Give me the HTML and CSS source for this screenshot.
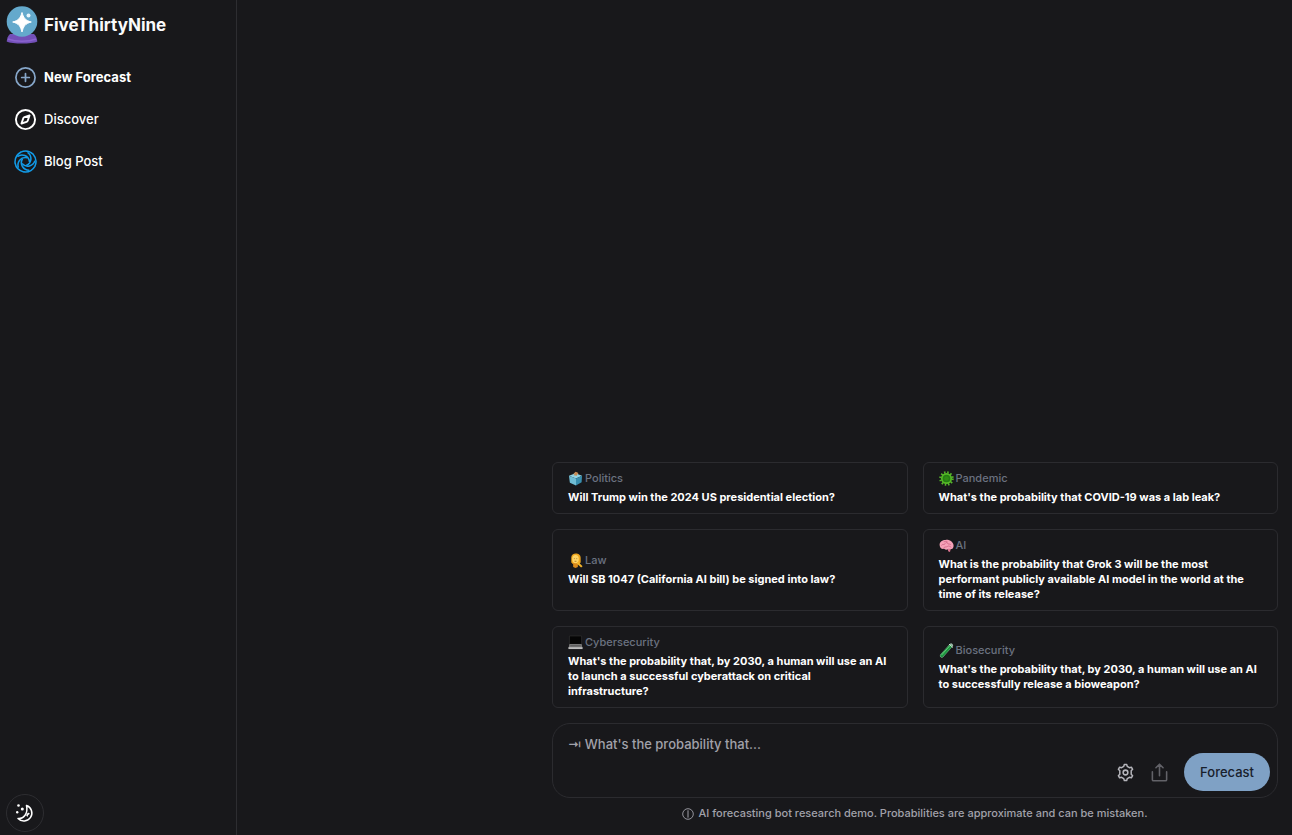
FILE: index.html
```html
<!DOCTYPE html>
<html lang="en">
<head>
    <meta charset="UTF-8">
    <meta name="viewport" content="width=device-width, initial-scale=1.0">
    <title>FiveThirtyNine</title>
    <link rel="stylesheet" href="styles.css">
</head>
<body>
    <aside class="sidebar">
        <a class="brand" href="#">
            <svg class="brand-logo" width="32" height="40" viewBox="0 0 32 40" aria-hidden="true">
                <path d="M4 29h24c2 2 3 4 3.300 7.500C26 39.300 6 39.300.7 36.500 1 33 2 31 4 29z" fill="#7350b8"/>
                <path d="M2 34c8 3 20 3 28 0" fill="none" stroke="#8a63cf" stroke-width="1.500"/>
                <circle cx="16" cy="16.500" r="15.300" fill="#64a9cc"/>
                <path d="M16 7.500C17.500 12.500 19 15.500 25.300 17 19 18.500 17.500 21.500 16 27 14.500 21.500 13 18.500 6.700 17 13 15.500 14.500 12.500 16 7.500z" fill="#fff" stroke="#fff" stroke-linejoin="round"/>
                <circle cx="22.500" cy="10.500" r="2" fill="#e6f5fc"/>
            </svg>
            <span>FiveThirtyNine</span>
        </a>
        <nav class="nav">
            <a class="nav-link active" href="#">
                <svg width="23" height="23" viewBox="0 0 24 24" fill="none" stroke="#86a6c9" stroke-width="1.800" stroke-linecap="round" aria-hidden="true">
                    <circle cx="12" cy="12" r="10"/>
                    <path d="M12 8v8M8 12h8"/>
                </svg>
                New Forecast
            </a>
            <a class="nav-link" href="#">
                <svg width="23" height="23" viewBox="0 0 24 24" fill="none" stroke="#fff" stroke-width="2" stroke-linejoin="round" aria-hidden="true">
                    <circle cx="12" cy="12" r="10"/>
                    <path d="M16.200 7.800l-1.800 5.300a2 2 0 0 1-1.300 1.300l-5.300 1.800 1.800-5.300a2 2 0 0 1 1.300-1.300z"/>
                </svg>
                Discover
            </a>
            <a class="nav-link" href="#">
                <svg width="23" height="23" viewBox="0 0 24 24" fill="none" stroke="#129be8" stroke-width="1.600" aria-hidden="true">
                    <defs>
                        <g id="blade">
                            <path d="M7 2.200C11.500.3 16.500 1 20 4.500"/>
                            <path d="M3.500 7C8 3.500 15.500 5.500 16.200 12.500"/>
                        </g>
                    </defs>
                    <use href="#blade"/>
                    <use href="#blade" transform="rotate(72 12 12)"/>
                    <use href="#blade" transform="rotate(144 12 12)"/>
                    <use href="#blade" transform="rotate(216 12 12)"/>
                    <use href="#blade" transform="rotate(288 12 12)"/>
                </svg>
                Blog Post
            </a>
        </nav>
        <button class="theme-toggle" type="button" aria-label="Toggle theme">
            <svg width="20" height="20" viewBox="0 0 20 20" aria-hidden="true">
                <path d="M11.500 2.500a8 8 0 1 1-8.500 13c5 .8 10.500-4.500 8.500-13z" fill="none" stroke="#fff" stroke-width="1.500" stroke-linejoin="round"/>
                <path d="M13 9.500l2 1.300-1.800 1.300-.8 2-1.300-1.800z" fill="#fff"/>
                <circle cx="3.500" cy="2.500" r="1.300" fill="#fff"/>
                <circle cx="7.300" cy="6" r="1.500" fill="#fff"/>
                <circle cx="2.200" cy="9.300" r="1.200" fill="#fff"/>
            </svg>
        </button>
    </aside>

    <main class="main">
        <div class="panel">
            <div class="cards">
                <button class="card" type="button">
                    <span class="topic">
                        <svg width="15" height="15" viewBox="0 0 16 16" aria-hidden="true">
                            <path d="M5.500 3.500L8 .8l3 1.400-1 3z" fill="#c98b54"/>
                            <path d="M1 5l7-2.500L15 5l-6.500 3z" fill="#91d3e4"/>
                            <path d="M1 5l7.500 3v7.500L2 12.500z" fill="#70bdd5"/>
                            <path d="M15 5L8.500 8v7.500l6-3.500z" fill="#388eae"/>
                            <path d="M6 4.500L8 1l2.500 1.200L9.500 5z" fill="#c98b54"/>
                        </svg>
                        Politics
                    </span>
                    <span class="question">Will Trump win the 2024 US presidential election?</span>
                </button>
                <button class="card" type="button">
                    <span class="topic">
                        <svg width="15" height="15" viewBox="0 0 16 16" aria-hidden="true">
                            <circle cx="8" cy="8" r="6.500" fill="none" stroke="#55b52c" stroke-width="2.500" stroke-dasharray="1.600 1.800"/>
                            <circle cx="8" cy="8" r="5" fill="#237d13" stroke="#55b826" stroke-width="1.800"/>
                            <circle cx="8" cy="8" r="2.500" fill="#2f8c13"/>
                        </svg>
                        Pandemic
                    </span>
                    <span class="question">What's the probability that COVID-19 was a lab leak?</span>
                </button>
                <button class="card" type="button">
                    <span class="topic">
                        <svg width="15" height="15" viewBox="0 0 16 16" aria-hidden="true">
                            <path d="M3.500 5c-.5-6 10-6 10 0v5l-2 2h-6l-2-2z" fill="#eea51e"/>
                            <path d="M5.500 10h5v5L8 16l-2.500-1z" fill="#d9891b"/>
                            <ellipse cx="8" cy="6.500" rx="3.500" ry="4.500" fill="#ffd565"/>
                            <path d="M6.300 6h.8M9 6h.8M7 8.800h2" stroke="#8c5a20" stroke-width=".8"/>
                            <path d="M9 11l2-1.500 4.500 4.500-1.500 1.500z" fill="#f4b52b"/>
                        </svg>
                        Law
                    </span>
                    <span class="question">Will SB 1047 (California AI bill) be signed into law?</span>
                </button>
                <button class="card" type="button">
                    <span class="topic">
                        <svg width="15" height="15" viewBox="0 0 16 16" aria-hidden="true">
                            <path d="M9.500 11l3 .5-.8 3.500-2-.8z" fill="#d9718e"/>
                            <path d="M1 9C-.5 5 3 2 7 2c5-.5 9 3 8.500 7-.5 3-3 3.500-5 2.500-2 1.500-4 1-5 0C3 12 1.500 11 1 9z" fill="#f5a1b8"/>
                            <path d="M2.500 8c1-2 3 0 4-2s3-1 3 0 2 0 3 1M5 11c0-2 3-1 4-2s3 0 4 1M5 4c2 0 2-1 4 0" fill="none" stroke="#c95f80" stroke-width=".8"/>
                        </svg>
                        AI
                    </span>
                    <span class="question">What is the probability that Grok 3 will be the most performant publicly available AI model in the world at the time of its release?</span>
                </button>
                <button class="card" type="button">
                    <span class="topic">
                        <svg width="15" height="15" viewBox="0 0 16 16" aria-hidden="true">
                            <path d="M1.500 1h13v9h-13z" fill="#050505" stroke="#333" stroke-width=".7"/>
                            <path d="M1.500 9.500h13l1 5H.5z" fill="#777"/>
                            <path d="M2.500 11.500h11" stroke="#555"/>
                            <path d="M.5 14h15" stroke="#bbb" stroke-width="2"/>
                        </svg>
                        Cybersecurity
                    </span>
                    <span class="question">What's the probability that, by 2030, a human will use an AI to launch a successful cyberattack on critical infrastructure?</span>
                </button>
                <button class="card" type="button">
                    <span class="topic">
                        <svg width="15" height="15" viewBox="0 0 16 16" fill="none" stroke-linecap="round" aria-hidden="true">
                            <path d="M3 13.500L13 2.500" stroke="#9bb9a8" stroke-width="4"/>
                            <path d="M3 13.500L12 3.600" stroke="#1e9440" stroke-width="3.500"/>
                            <path d="M3 12.500L11.500 3" stroke="#65ce7b"/>
                            <path d="M11 1.500l3.500 3" stroke="#d7e5dc" stroke-width="1"/>
                        </svg>
                        Biosecurity
                    </span>
                    <span class="question">What's the probability that, by 2030, a human will use an AI to successfully release a bioweapon?</span>
                </button>
            </div>

            <form class="prompt">
                <textarea class="prompt-input" rows="1" aria-label="Forecast question" placeholder="⇥ What's the probability that..."></textarea>
                <div class="prompt-actions">
                    <button class="icon-button" type="button" aria-label="Settings">
                        <svg width="19" height="19" viewBox="0 0 24 24" fill="none" stroke="#b5b5bb" stroke-width="1.900" stroke-linejoin="round" aria-hidden="true">
                            <path d="M9.800 4.300 10.500 2h3l.7 2.300 2.700 1.600 2.500-.6 1.600 2.700-1.800 1.900v4.200l1.800 1.900-1.600 2.700-2.500-.6-2.700 1.600-.7 2.300h-3l-.7-2.300-2.700-1.600-2.500.6L3 16l1.800-1.900V9.900L3 8l1.600-2.700 2.500.6z"/>
                            <circle cx="12" cy="12" r="3"/>
                        </svg>
                    </button>
                    <button class="icon-button" type="button" aria-label="Share" disabled>
                        <svg width="19" height="19" viewBox="0 0 24 24" fill="none" stroke="#626268" stroke-width="2" stroke-linecap="round" stroke-linejoin="round" aria-hidden="true">
                            <path d="M3 11v10a1.500 1.500 0 0 0 1.500 1.500h15A1.500 1.500 0 0 0 21 21V11M12 16V2M7.500 6 12 1.500 16.500 6"/>
                        </svg>
                    </button>
                    <button class="submit" type="submit">Forecast</button>
                </div>
            </form>
            <p class="note">
                <svg width="12" height="12" viewBox="0 0 12 12" fill="none" stroke="#a1a1aa" aria-hidden="true">
                    <circle cx="6" cy="6" r="5.300" stroke-width=".9"/>
                    <path d="M6 2.300v7.400"/>
                </svg>
                AI forecasting bot research demo. Probabilities are approximate and can be mistaken.
            </p>
        </div>
    </main>
</body>
</html>
```
FILE: styles.css
```css
* {
    box-sizing: border-box;
}
body {
    margin: 0;
    min-height: 100vh;
    display: flex;
    background: #18181b;
    color: #fff;
    font-family: Inter, "DejaVu Sans", sans-serif;
    font-size: 13px;
}
button, textarea {
    font-family: inherit;
}
button {
    cursor: pointer;
}

/* Sidebar */
.sidebar {
    width: 237px;
    flex-shrink: 0;
    display: flex;
    flex-direction: column;
    padding: 5px 6px 3px;
    border-right: 1px solid #2d2d31;
}
.brand {
    display: flex;
    align-items: center;
    gap: 6px;
    color: #fafafa;
    font-size: 17px;
    font-weight: 700;
    text-decoration: none;
}
.nav {
    display: flex;
    flex-direction: column;
    gap: 4px;
    margin-top: 13px;
}
.nav-link {
    display: flex;
    align-items: center;
    gap: 7px;
    height: 38px;
    padding: 0 8px;
    color: #fff;
    font-weight: 500;
    text-decoration: none;
}
.nav-link.active {
    font-weight: 700;
}
.theme-toggle {
    display: flex;
    align-items: center;
    justify-content: center;
    width: 38px;
    height: 38px;
    margin-top: auto;
    padding: 0;
    border: 1px solid #2d2d31;
    border-radius: 50%;
    background: none;
}

/* Main area */
.main {
    flex: 1;
    display: flex;
    flex-direction: column;
    justify-content: flex-end;
    padding: 14px;
}
.panel {
    width: 100%;
    max-width: 726px;
    margin-left: auto;
}
.cards {
    display: grid;
    grid-template-columns: 1fr 1fr;
    gap: 15px;
}
.card {
    display: flex;
    flex-direction: column;
    justify-content: center;
    gap: 4px;
    padding: 8px 15px;
    border: 1px solid #2b2b2f;
    border-radius: 6px;
    background: none;
    color: #fff;
    font-size: 11px;
    line-height: 15px;
    text-align: left;
}
.topic {
    display: flex;
    align-items: center;
    gap: 2px;
    color: #6b7280;
    font-weight: 500;
}
.question {
    font-weight: 700;
}

/* Prompt box */
.prompt {
    margin-top: 15px;
    padding: 11px 7px 6px 15px;
    border: 1px solid #2b2b2f;
    border-radius: 18px;
}
.prompt-input {
    display: block;
    width: 100%;
    height: 18px;
    padding: 0;
    border: none;
    outline: none;
    resize: none;
    overflow: hidden;
    background: none;
    color: #fff;
    font-size: 13px;
    font-weight: 500;
    line-height: 18px;
}
.prompt-input::placeholder {
    color: #a1a1aa;
}
.prompt-actions {
    display: flex;
    align-items: center;
    justify-content: flex-end;
    gap: 15px;
}
.icon-button {
    display: flex;
    padding: 0;
    border: none;
    background: none;
}
.submit {
    height: 38px;
    padding: 0 16px;
    border: none;
    border-radius: 19px;
    background: #7fa1c5;
    color: #18202c;
    font-size: 13px;
    font-weight: 500;
}
.note {
    display: flex;
    align-items: center;
    justify-content: center;
    gap: 4px;
    margin: 8px 0 0;
    color: #a1a1aa;
    font-size: 11px;
    font-weight: 500;
    line-height: 15px;
}
```
